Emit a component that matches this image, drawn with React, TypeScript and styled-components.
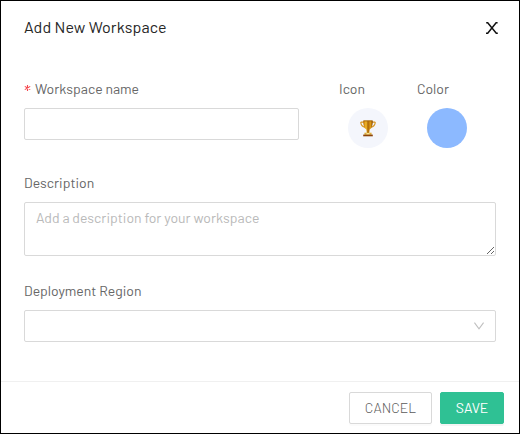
import React from 'react';
import styled, { createGlobalStyle } from 'styled-components';

const GlobalStyle = createGlobalStyle`
  *, *::before, *::after { box-sizing: border-box; }
  body {
    margin: 0;
    background: #fff;
    font-family: Barlow, Roboto, "Liberation Sans", sans-serif;
    font-size: 14px;
    line-height: 22px;
    color: #666;
  }
`;

const Dialog = styled.form`
  width: 520px;
  height: 434px;
  display: flex;
  flex-direction: column;
  background: #fff;
  border: 1px solid #000;
`;

const Header = styled.header`
  height: 53px;
  padding: 0 20px 0 23px;
  display: flex;
  align-items: center;
  justify-content: space-between;
`;

const Title = styled.h1`
  margin: 0;
  font-size: 16px;
  font-weight: 400;
  line-height: 22px;
  height: 24px;
  letter-spacing: 0.08px;
  color: #262626;
`;

const CloseButton = styled.button`
  display: flex;
  padding: 0;
  border: 0;
  background: none;
`;

const Body = styled.div`
  flex: 1;
  padding: 24px 23px 0;
  display: flex;
  flex-direction: column;
  gap: 24px;
`;

const TopRow = styled.div`
  display: grid;
  grid-template-columns: 275px 38px 50px;
  column-gap: 40px;
  height: 70px;
`;

const Field = styled.div`
  display: flex;
  flex-direction: column;
  gap: 8px;
`;

const Label = styled.label`
  display: flex;
  height: 22px;
  font-weight: 400;
  white-space: nowrap;
`;

const Required = styled.span`
  display: flex;
  align-items: center;
  width: 11px;
  padding-bottom: 2px;
`;

const TextInput = styled.input`
  width: 100%;
  height: 32px;
  padding: 4px 11px;
  border: 1px solid #d9d9d9;
  border-radius: 2px;
  font: inherit;
  outline: none;
`;

const TextArea = styled.textarea`
  display: block;
  width: 100%;
  height: 54px;
  padding: 4px 11px;
  border: 1px solid #d9d9d9;
  border-radius: 2px;
  font: inherit;
  outline: none;
  resize: vertical;
  &::placeholder { color: #b9b9b9; opacity: 1; }
`;

const SelectBox = styled.div`
  height: 32px;
  padding: 0 11px;
  display: flex;
  align-items: center;
  justify-content: flex-end;
  border: 1px solid #d9d9d9;
  border-radius: 2px;
`;

const Swatch = styled.button<{ $color: string; $indent: number }>`
  flex: none;
  width: 40px;
  height: 40px;
  margin-left: ${(p) => p.$indent}px;
  padding: 0;
  display: flex;
  align-items: center;
  justify-content: center;
  border: 0;
  border-radius: 50%;
  background: ${(p) => p.$color};
`;

const Footer = styled.footer`
  height: 52px;
  padding: 10px 15px 0;
  display: flex;
  justify-content: flex-end;
  gap: 8px;
  border-top: 1px solid #f0f0f0;
`;

const Button = styled.button<{ $primary?: boolean }>`
  width: ${(p) => (p.$primary ? 64 : 83)}px;
  height: 32px;
  padding: 0 0 1px;
  border: 1px solid ${(p) => (p.$primary ? '#2fc194' : '#d9d9d9')};
  border-radius: 2px;
  background: ${(p) => (p.$primary ? '#2fc194' : '#fff')};
  box-shadow: 0 2px 0 rgba(0, 0, 0, ${(p) => (p.$primary ? 0.045 : 0.015)});
  color: ${(p) => (p.$primary ? '#fff' : '#5a5a5a')};
  font-family: inherit;
  font-size: 14px;
  font-weight: ${(p) => (p.$primary ? 400 : 300)};
`;

const AsteriskIcon = () => (
  <svg width="7" height="8" viewBox="0 0 7 8" fill="none" stroke="#f5494f" strokeWidth="1.1">
    <path d="M3.5 1V7M0.8 2.4L6.2 5.6M6.2 2.4L0.8 5.6" />
  </svg>
);

const CloseIcon = () => (
  <svg width="14" height="14" viewBox="0 0 14 14" fill="none" stroke="#111" strokeWidth="1.5">
    <path d="M1.2 1.7H2.7L11.3 12.3H12.8M12.6 1.7H11.1L2.7 12.3H1" />
  </svg>
);

const ChevronIcon = () => (
  <svg width="10" height="8" viewBox="0 0 10 8" fill="none" stroke="#bfbfbf" strokeWidth="1.1">
    <path d="M0.4 0.6L5 6.9L9.6 0.6" />
  </svg>
);

const TrophyIcon = () => (
  <svg width="16" height="17" viewBox="0 0 16 17">
    <defs>
      <linearGradient id="cup">
        <stop offset="0" stopColor="#b96c05" />
        <stop offset="0.3" stopColor="#f6bd2b" />
        <stop offset="0.5" stopColor="#a96406" />
        <stop offset="0.75" stopColor="#e09c16" />
        <stop offset="1" stopColor="#824604" />
      </linearGradient>
    </defs>
    <path
      d="M4 2.1H1.2Q.7 2.1.8 2.8C1.2 5.4 2.8 6.7 5 7.1M12 2.1h2.8q.5 0 .4.7C14.8 5.4 13.2 6.7 11 7.1"
      fill="none"
      stroke="#d6931c"
      strokeWidth="1.1"
    />
    <path d="M3.2.8h9.6c0 4.5-.8 7.3-3.1 8.7L9.2 13H6.8L6.3 9.5C4 8.1 3.2 5.3 3.2.8Z" fill="url(#cup)" />
    <path d="M3.5.9h9" stroke="#a66709" />
    <path d="M4.4 12.7h7.2v2.1H4.4Z" fill="#dfb13e" />
    <path d="M3.2 14.6h9.6v1.7H3.2Z" fill="#8b4308" />
    <path d="M6.5 13.7h3" stroke="#fff0a6" />
  </svg>
);

export default function App() {
  return (
    <>
      <GlobalStyle />
      <Dialog onSubmit={(e) => e.preventDefault()}>
        <Header>
          <Title>Add New Workspace</Title>
          <CloseButton type="button" aria-label="Close"><CloseIcon /></CloseButton>
        </Header>
        <Body>
          <TopRow>
            <Field>
              <Label htmlFor="name"><Required><AsteriskIcon /></Required>Workspace name</Label>
              <TextInput id="name" />
            </Field>
            <Field>
              <Label>Icon</Label>
              <Swatch type="button" $color="#f4f6fc" $indent={9} aria-label="Choose icon"><TrophyIcon /></Swatch>
            </Field>
            <Field>
              <Label>Color</Label>
              <Swatch type="button" $color="#8cb9ff" $indent={10} aria-label="Choose color" />
            </Field>
          </TopRow>
          <Field>
            <Label htmlFor="description">Description</Label>
            <TextArea id="description" placeholder="Add a description for your workspace" />
          </Field>
          <Field>
            <Label>Deployment Region</Label>
            <SelectBox role="combobox" aria-label="Deployment Region"><ChevronIcon /></SelectBox>
          </Field>
        </Body>
        <Footer>
          <Button type="button">CANCEL</Button>
          <Button type="submit" $primary>SAVE</Button>
        </Footer>
      </Dialog>
    </>
  );
}
